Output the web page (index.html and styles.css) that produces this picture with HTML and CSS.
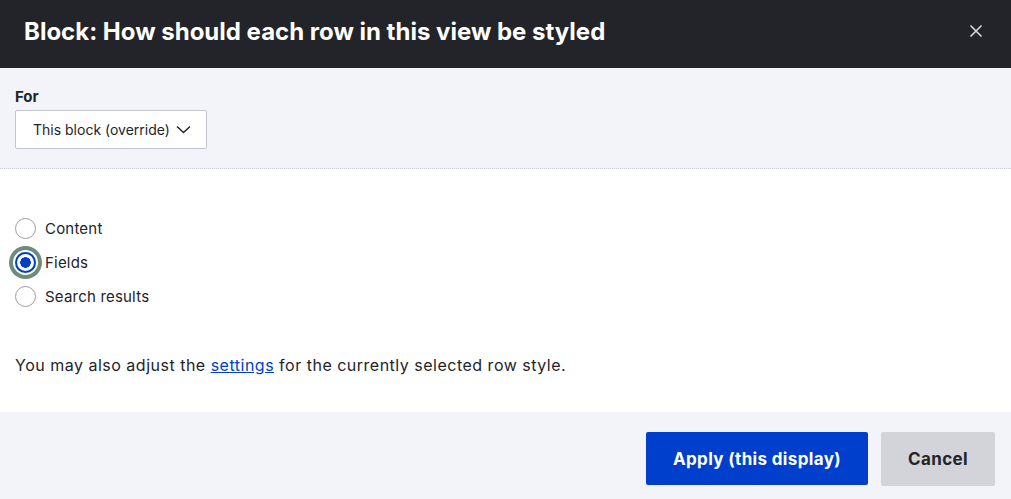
FILE: index.html
```html
<!DOCTYPE html>
<html>
<head>
<meta charset="utf-8">
<link rel="stylesheet" href="styles.css">
</head>
<body>
<div class="dialog">
  <header class="head">
    <h1 class="title">Block: How should each row in this view be styled</h1>
    <span class="close">
      <svg width="14" height="14" viewBox="0 0 14 14"><path d="M1.5 1.5 L12.5 12.5 M12.5 1.5 L1.5 12.5" stroke="#d8d9de" stroke-width="1.6" fill="none"/></svg>
    </span>
  </header>
  <section class="override">
    <label class="for-label">For</label>
    <div class="select">
      <span>This block (override)</span>
      <svg width="15" height="9" viewBox="0 0 15 9"><path d="M1 1.5 L7.5 7.5 L14 1.5" stroke="#232429" stroke-width="1.5" fill="none"/></svg>
    </div>
  </section>
  <section class="content">
    <div class="radios">
      <label class="radio-row"><span class="radio"></span>Content</label>
      <label class="radio-row"><span class="radio checked"></span>Fields</label>
      <label class="radio-row"><span class="radio"></span>Search results</label>
    </div>
    <p class="note">You may also adjust the <a href="#">settings</a> for the currently selected row style.</p>
  </section>
  <footer class="foot">
    <button class="btn primary">Apply (this display)</button>
    <button class="btn secondary">Cancel</button>
  </footer>
</div>
</body>
</html>
```
FILE: styles.css
```css
* { box-sizing: border-box; }
html, body { margin: 0; padding: 0; }
body {
  font-family: Inter, "Noto Sans", sans-serif;
  color: #232429;
  background: #fff;
  width: 1011px;
  height: 499px;
  overflow: hidden;
}
.dialog { display: flex; flex-direction: column; height: 499px; }
.head {
  height: 68px;
  background: #232429;
  display: flex;
  align-items: center;
  justify-content: space-between;
  padding: 0 28px 0 24px;
}
.title {
  margin: 0;
  color: #fff;
  font-size: 24px;
  font-weight: 700;
  letter-spacing: 0;
  padding-bottom: 6px;
}
.close { display: flex; padding-bottom: 6px; }
.override {
  background: #f3f4f9;
  height: 101px;
  padding: 20px 15px 0;
  border-bottom: 1px dotted #c9cbd3;
}
.for-label {
  display: block;
  font-size: 15px;
  font-weight: 700;
  line-height: 18px;
  margin-bottom: 4px;
}
.select {
  width: 192px;
  height: 39px;
  background: #fff;
  border: 1px solid #c4c6cf;
  border-radius: 2px;
  display: flex;
  align-items: center;
  gap: 6px;
  padding-left: 17px;
  font-size: 14px;
}
.content {
  flex: 1;
  padding: 49px 15px 0;
}
.radios { display: flex; flex-direction: column; gap: 13px; }
.radio-row {
  display: flex;
  align-items: center;
  gap: 9px;
  font-size: 15px;
  line-height: 21px;
  letter-spacing: 0.2px;
}
.radio {
  width: 21px;
  height: 21px;
  border-radius: 50%;
  border: 1px solid #9a9da7;
  background: #fff;
}
.radio.checked {
  border: 2px solid #003ecc;
  background: radial-gradient(circle, #003ecc 0 5px, #fff 5.5px);
  box-shadow: 0 0 0 2px #fff, 0 0 0 6px #6e8b7c;
}
.note {
  margin: 48px 0 0;
  font-size: 16px;
  line-height: 20px;
  letter-spacing: 0.5px;
}
.note a { color: #003ecc; }
.foot {
  height: 87px;
  background: #f3f4f9;
  display: flex;
  justify-content: flex-end;
  align-items: flex-start;
  padding: 20px 16px 0 0;
  gap: 13px;
}
.btn {
  font-family: inherit;
  font-size: 17px;
  font-weight: 700;
  letter-spacing: 0.35px;
  height: 53px;
  border: none;
  border-radius: 2px;
}
.primary { background: #003ecc; color: #fff; width: 222px; }
.secondary { background: #d3d4d9; color: #232429; width: 114px; height: 54px; }
```
